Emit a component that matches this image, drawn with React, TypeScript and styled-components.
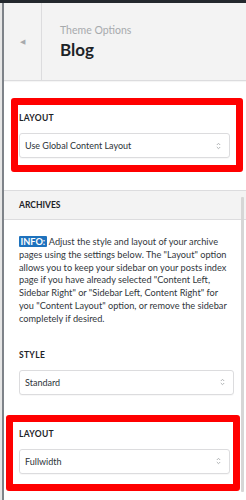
import React from "react";
import styled, { createGlobalStyle } from "styled-components";

const GlobalStyle = createGlobalStyle`
    html, body {
        margin: 0;
        padding: 0;
        background: #ffffff;
    }
    body {
        font-family: Lato, "Open Sans", sans-serif;
        color: #2c3338;
    }
`;

// =============================================================================
// FRAME
// =============================================================================
const Frame = styled.div`
    position: relative;
    width: 246px;
    height: 500px;
    overflow: hidden;
    display: flex;
    flex-direction: column;
    background: #ffffff;
`;

const TopBar = styled.div`
    height: 3px;
    flex: none;
    background: #23282d;
`;

const Body = styled.div`
    flex: 1;
    display: flex;
    border-left: 2px solid #e6e6e6;
`;

const Panel = styled.div`
    flex: 1;
    display: flex;
    flex-direction: column;
    border-left: 2px solid #7e8389;
    min-width: 0;
`;

// =============================================================================
// HEADER
// =============================================================================
const Header = styled.div`
    height: 77px;
    flex: none;
    display: flex;
    background: #f3f3f3;
    border-bottom: 1px solid #dcdcde;
    box-shadow: 0 1px 1px rgba(0, 0, 0, 0.04);
`;

const BackButton = styled.div`
    width: 37px;
    display: flex;
    align-items: center;
    justify-content: center;
    border-right: 1px solid #dcdcde;
    color: #a7aaad;
    font-size: 7px;
`;

const TitleBlock = styled.div`
    display: flex;
    flex-direction: column;
    justify-content: center;
    padding-left: 18px;
`;

const Crumb = styled.span`
    font-size: 10.5px;
    line-height: 12px;
    color: #a7aaad;
`;

const Title = styled.h1`
    margin: 5px 0 0;
    font-size: 17px;
    line-height: 18px;
    font-weight: 700;
    color: #1d2327;
`;

// =============================================================================
// CONTROLS
// =============================================================================
const Section = styled.div`
    padding: 17px 3px 18px 7px;
    border-bottom: 1px solid #dcdcde;
`;

interface HighlightProps {
    $inset: string;
}

const Highlight = styled.div<HighlightProps>`
    border: 7px solid #ff0000;
    border-radius: 3px;
    padding: ${(props) => props.$inset};
`;

const Label = styled.div`
    font-size: 8.5px;
    line-height: 12px;
    font-weight: 700;
    letter-spacing: 0.3px;
    text-transform: uppercase;
    color: #1d2327;
    margin-bottom: 9px;
`;

const SelectBox = styled.div`
    height: 25px;
    box-sizing: border-box;
    display: flex;
    align-items: center;
    justify-content: space-between;
    padding: 0 8px 0 5px;
    border: 1px solid #dcdcde;
    border-radius: 3px;
    background: #ffffff;
    box-shadow: 0 1px 1px rgba(0, 0, 0, 0.03);
    font-size: 9px;
    color: #2c3338;
`;

const Chevrons = () => (
    <svg width="5" height="8" viewBox="0 0 5 8" fill="none">
        <path d="M0.8 3 L2.5 1.3 L4.2 3" stroke="#a7aaad" strokeWidth="0.9" />
        <path d="M0.8 5 L2.5 6.7 L4.2 5" stroke="#a7aaad" strokeWidth="0.9" />
    </svg>
);

const Select = ({ value }: { value: string }) => (
    <SelectBox>
        <span>{value}</span>
        <Chevrons />
    </SelectBox>
);

// =============================================================================
// ARCHIVES
// =============================================================================
const SectionHeading = styled.div`
    height: 28px;
    flex: none;
    display: flex;
    align-items: center;
    padding-left: 15px;
    background: #f3f3f3;
    border-bottom: 1px solid #dcdcde;
    font-size: 8.5px;
    font-weight: 700;
    text-transform: uppercase;
    color: #1d2327;
`;

const Content = styled.div`
    padding: 16px 12px 0 15px;
`;

const Info = styled.p`
    margin: 0 0 23px;
    font-size: 9.2px;
    line-height: 12.8px;
    white-space: nowrap;
    color: #32373c;
`;

const Badge = styled.span`
    display: inline-block;
    padding: 0 1.5px;
    line-height: 11px;
    background: #1e72bd;
    color: #ffffff;
    font-weight: 700;
    border-radius: 1px;
`;

const Control = styled.div`
    margin-bottom: 20px;
`;

const Bottom = styled.div`
    padding: 0 6px 0 2px;
`;

const Scrollbar = styled.div`
    position: absolute;
    top: 197px;
    right: 2px;
    bottom: 8px;
    width: 3px;
    background: #d6d6d6;
    border-radius: 1px;
`;

export default function App() {
    return (
        <>
            <GlobalStyle />
            <Frame>
                <TopBar />
                <Body>
                    <Panel>
                        <Header>
                            <BackButton>◀</BackButton>
                            <TitleBlock>
                                <Crumb>Theme Options</Crumb>
                                <Title>Blog</Title>
                            </TitleBlock>
                        </Header>
                        <Section>
                            <Highlight $inset="7px 6px 7px 1px">
                                <Label>Layout</Label>
                                <Select value="Use Global Content Layout" />
                            </Highlight>
                        </Section>
                        <SectionHeading>Archives</SectionHeading>
                        <Content>
                            <Info>
                                <Badge>INFO:</Badge> Adjust the style and layout of your archive
                                <br />
                                pages using the settings below. The "Layout" option
                                <br />
                                allows you to keep your sidebar on your posts index
                                <br />
                                page if you have already selected "Content Left,
                                <br />
                                Sidebar Right" or "Sidebar Left, Content Right" for
                                <br />
                                you "Content Layout" option, or remove the sidebar
                                <br />
                                completely if desired.
                            </Info>
                            <Control>
                                <Label>Style</Label>
                                <Select value="Standard" />
                            </Control>
                        </Content>
                        <Bottom>
                            <Highlight $inset="6px 3px 10px 6px">
                                <Label>Layout</Label>
                                <Select value="Fullwidth" />
                            </Highlight>
                        </Bottom>
                    </Panel>
                </Body>
                <Scrollbar />
            </Frame>
        </>
    );
}
